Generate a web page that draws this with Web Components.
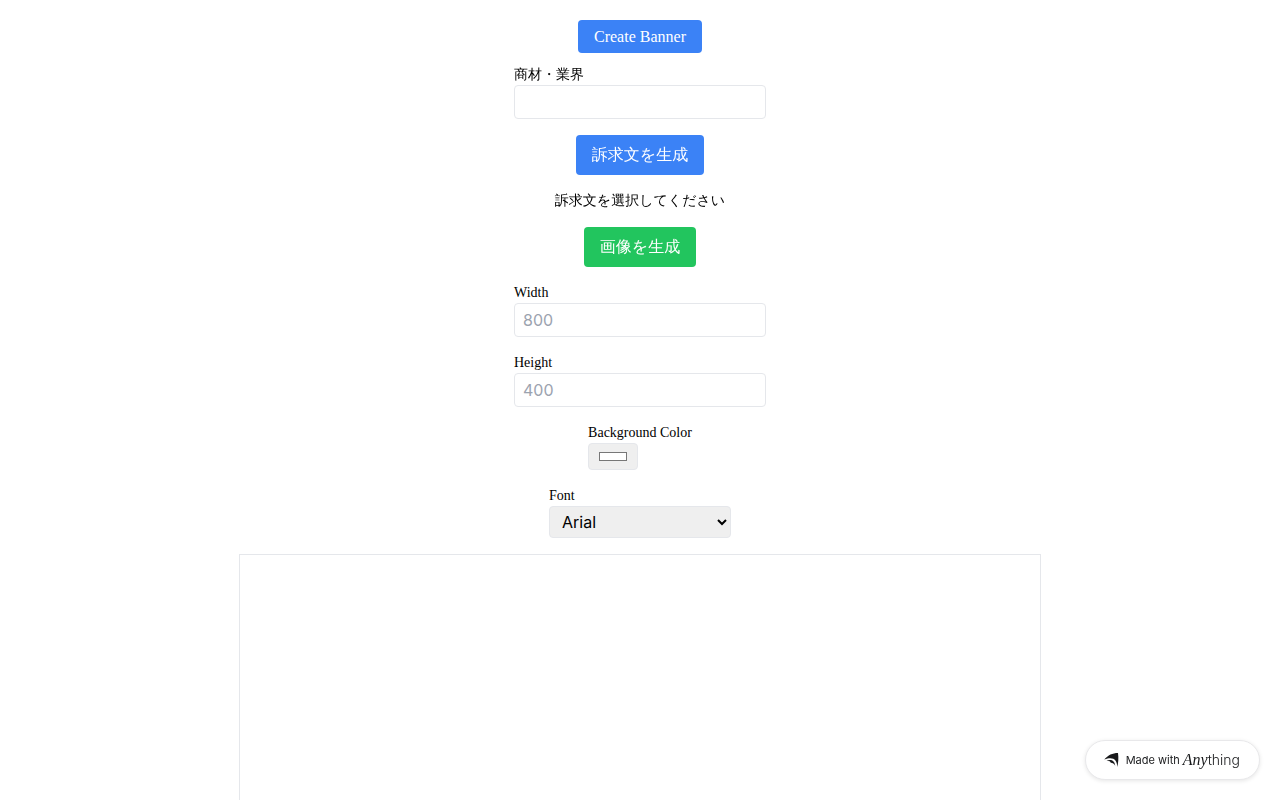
<!DOCTYPE html>
<html lang="ja">
<head>
<meta charset="utf-8">
<meta name="viewport" content="width=device-width, initial-scale=1">
<title>Create Banner</title>
<style>
  body {
    margin: 0;
    color: #000;
    background: #fff;
    font: 16px/24px "Liberation Serif", "WenQuanYi Zen Hei", "Noto Sans CJK JP", serif;
  }
</style>
</head>
<body>
<banner-maker></banner-maker>
<made-with-badge></made-with-badge>

<script>
class BaseElement extends HTMLElement {
  connectedCallback() {
    if (this.shadowRoot) return;
    this.attachShadow({ mode: 'open' }).innerHTML =
      '<style>*, ::before, ::after { box-sizing: border-box; }</style>' + this.render();
  }
}

customElements.define('action-button', class extends BaseElement {
  render() {
    return `
      <style>
        :host { display: block; --fill: #3b82f6; }
        :host([tone="green"]) { --fill: #22c55e; }
        button {
          display: block; margin: 0; padding: 8px 16px; border: 0; border-radius: 4px;
          background: var(--fill); color: #fff; font: inherit; cursor: pointer;
        }
        :host([compact]) button { padding: 0 16px; line-height: 33px; }
      </style>
      <button type="button"><slot></slot></button>`;
  }
});

customElements.define('form-field', class extends BaseElement {
  render() {
    const type = this.getAttribute('type') || 'text';
    const hint = this.getAttribute('hint') || '';
    const control = type === 'select'
      ? `<select id="control"><option>Arial</option><option>Verdana</option><option>Times New Roman</option><option>Courier New</option></select>`
      : `<input id="control" type="${type}" placeholder="${hint}"${type === 'color' ? ' value="#ffffff"' : ''}>`;
    return `
      <style>
        :host { display: block; }
        label { display: block; font-size: 14px; line-height: 20px; }
        input, select {
          display: block; margin: 0; padding: 4px 8px; border: 1px solid #e5e7eb;
          border-radius: 4px; color: #000; font: 16px/24px Inter, sans-serif;
        }
        input { width: 252px; height: 34px; max-width: 100%; background: #fff; }
        input::placeholder { color: #9ca3af; opacity: 1; }
        input[type="color"] { width: 50px; height: 27px; background: #efefef; }
        select { width: 182px; height: 32px; background: #efefef; }
      </style>
      <label for="control">${this.getAttribute('label')}</label>
      ${control}`;
  }
});

customElements.define('banner-maker', class extends BaseElement {
  render() {
    return `
      <style>
        :host { display: block; }
        main {
          display: flex; flex-direction: column; align-items: center;
          gap: 16px; padding: 20px 20px 0;
        }
        header { display: grid; justify-items: center; gap: 12px; }
        p { margin: 0; font-size: 14px; line-height: 20px; }
        canvas { display: block; max-width: 100%; border: 1px solid #e5e7eb; }
      </style>
      <main>
        <header>
          <action-button compact>Create Banner</action-button>
          <form-field label="商材・業界"></form-field>
        </header>
        <action-button>訴求文を生成</action-button>
        <p>訴求文を選択してください</p>
        <action-button tone="green">画像を生成</action-button>
        <form-field label="Width" type="number" hint="800"></form-field>
        <form-field label="Height" type="number" hint="400"></form-field>
        <form-field label="Background Color" type="color"></form-field>
        <form-field label="Font" type="select"></form-field>
        <canvas width="800" height="400"></canvas>
      </main>`;
  }
});

customElements.define('made-with-badge', class extends BaseElement {
  render() {
    return `
      <style>
        :host { display: block; position: fixed; right: 20px; bottom: 20px; }
        a {
          display: flex; align-items: center; height: 40px; padding: 0 19px 0 18px;
          border: 1px solid #e8e8ea; border-radius: 20px; background: #fff;
          box-shadow: 0 1px 4px rgba(0, 0, 0, .1); color: #18191b;
          font: 11px/20px Inter, sans-serif; text-decoration: none; white-space: nowrap;
        }
        svg { width: 15px; height: 16px; margin-right: 7px; }
        .brand { display: flex; align-items: baseline; margin-left: 3px; }
        i { font: italic 16px/20px "Liberation Serif", serif; }
        b { font: 300 14px/20px Inter, sans-serif; }
      </style>
      <a href="#">
        <svg viewBox="0 0 15 16" aria-hidden="true" fill="#18191b">
          <path d="M.3 7.600C4 3 8.500 1 14 1c.7 5 .4 9.500-.7 14C13 7.500 9 4.200.3 7.600Z"/>
          <path d="M2.500 8.800c4.500-2 8.300 0 8.700 4.900C9.900 11.400 8.500 10.600 6.700 10.700 6.800 9.500 5.300 9 2.500 8.800Z"/>
        </svg>
        <span>Made with</span>
        <span class="brand"><i>Any</i><b>thing</b></span>
      </a>`;
  }
});
</script>
</body>
</html>
